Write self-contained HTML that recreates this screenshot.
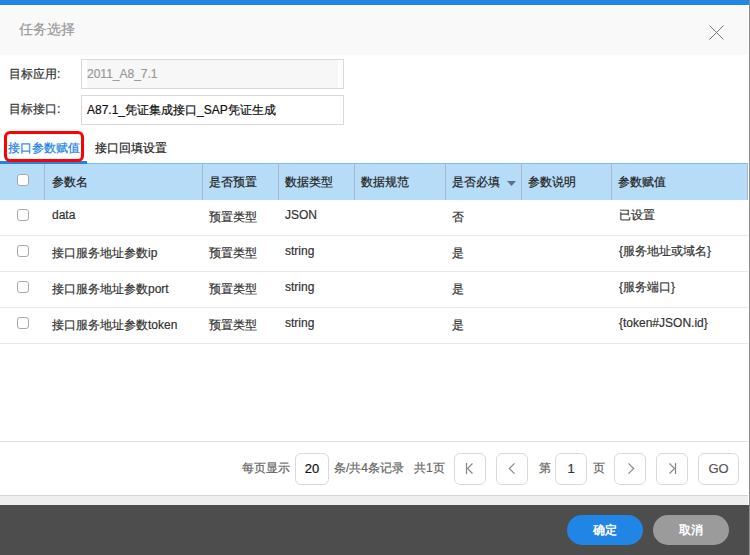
<!DOCTYPE html>
<html><head><meta charset="utf-8">
<style>
*{box-sizing:border-box;margin:0;padding:0}
html,body{width:750px;height:555px;overflow:hidden;background:#fff;font-family:"Liberation Sans",sans-serif;font-size:12px;color:#333;-webkit-text-stroke-width:0.2px}
.abs{position:absolute}
#topbar{left:0;top:0;width:749px;height:5px;background:#2185e6}
#rline{left:749px;top:0;width:1px;height:555px;background:#8c8c8c}
#hdr{left:0;top:6px;width:748px;height:49px;background:#f9f9fa}
#title{left:19px;top:20px;font-size:14px;color:#999;line-height:18px;white-space:nowrap}
.lbl{left:9px;font-size:12px;color:#333;line-height:14px;white-space:nowrap}
.inp{left:81px;width:263px;height:30px;border:1px solid #d9d9d9;background:#fff}
.inp .in{position:absolute;left:5px;right:5px;top:0;bottom:0}
.inp span{position:absolute;left:1px;top:7px;line-height:14px;font-size:12px;white-space:nowrap}
#redbox{z-index:3;left:4px;top:131px;width:80px;height:31px;border:3px solid #f00;border-radius:6px}
#tabline{left:0;top:161px;width:87px;height:3px;background:#1f84e4;z-index:2}
.tab{top:141px;line-height:14px;font-size:12px;white-space:nowrap}
#thead{left:0;top:163px;width:748px;height:37px;background:#b6dcf7;border-top:1px solid #78bdf8}
.sep{top:164px;width:1px;height:36px;background:#aab6d6}
.th{top:175px;line-height:14px;font-size:12px;color:#222;white-space:nowrap}
.cb{width:12px;height:12px;border:1px solid #a9a9a9;border-radius:3px;background:#fff}
.rowb{left:0;width:748px;height:1px;background:#e8e8e8}
.td{line-height:14px;font-size:12px;color:#333;white-space:nowrap}
#pgtop{left:0;top:441px;width:748px;height:1px;background:#e3e3e3}
#pgbot{left:0;top:495px;width:748px;height:1px;background:#d4d4d4}
#strip{left:0;top:496px;width:748px;height:9px;background:#eeeeee}
#foot{left:0;top:505px;width:749px;height:50px;background:#4d4d4d}
.pbtn{top:453px;width:32px;height:32px;border:1px solid #d9d9d9;border-radius:6px;background:#fff}
.ptxt{top:461px;line-height:14px;font-size:12px;color:#666;white-space:nowrap}
.fbtn{-webkit-text-stroke-width:0;top:515px;width:76px;height:30px;border-radius:15px;color:#fff;font-weight:bold;font-size:12px;line-height:30px;text-align:center}
</style></head><body>
<div class="abs" id="topbar"></div>
<div class="abs" id="hdr"></div>
<div class="abs" id="rline"></div>
<div class="abs" id="title">任务选择</div>
<svg class="abs" style="left:0;top:0" width="750" height="60"><path d="M709.5 25.5L723.5 39.5M723.5 25.5L709.5 39.5" stroke="#777" stroke-width="1" fill="none"/></svg>

<div class="abs lbl" style="top:67px">目标应用:</div>
<div class="abs inp" style="top:59px"><div class="in" style="background:#f7f7f7"></div><span style="left:5px;color:#999">2011_A8_7.1</span></div>
<div class="abs lbl" style="top:102px">目标接口:</div>
<div class="abs inp" style="top:95px"><span style="left:5px;color:#111">A87.1_凭证集成接口_SAP凭证生成</span></div>

<div class="abs tab" style="left:8px;color:#1a7fe8">接口参数赋值</div>
<div class="abs tab" style="left:95px;color:#222">接口回填设置</div>
<div class="abs" id="tabline"></div>
<div class="abs" id="redbox"></div>

<div class="abs" id="thead"></div>
<div class="abs sep" style="left:44px"></div>
<div class="abs sep" style="left:202px"></div>
<div class="abs sep" style="left:278px"></div>
<div class="abs sep" style="left:354px"></div>
<div class="abs sep" style="left:445px"></div>
<div class="abs sep" style="left:521px"></div>
<div class="abs sep" style="left:611px"></div>
<div class="abs sep" style="left:747px"></div>
<div class="abs cb" style="left:17px;top:174px"></div>
<div class="abs th" style="left:52px">参数名</div>
<div class="abs th" style="left:209px">是否预置</div>
<div class="abs th" style="left:285px">数据类型</div>
<div class="abs th" style="left:361px">数据规范</div>
<div class="abs th" style="left:452px">是否必填</div>
<svg class="abs" style="left:507px;top:181px" width="9" height="5" viewBox="0 0 9 5"><path d="M0 0H9L4.5 5Z" fill="#5f6f85"/></svg>
<div class="abs th" style="left:528px">参数说明</div>
<div class="abs th" style="left:618px">参数赋值</div>

<!-- rows -->
<div class="abs rowb" style="top:235px"></div>
<div class="abs rowb" style="top:271px"></div>
<div class="abs rowb" style="top:307px"></div>
<div class="abs rowb" style="top:343px"></div>

<div class="abs cb" style="left:17px;top:209px"></div>
<div class="abs td" style="left:52px;top:208px">data</div>
<div class="abs td" style="left:209px;top:210px">预置类型</div>
<div class="abs td" style="left:285px;top:208px">JSON</div>
<div class="abs td" style="left:452px;top:210px">否</div>
<div class="abs td" style="left:619px;top:208px">已设置</div>

<div class="abs cb" style="left:17px;top:245px"></div>
<div class="abs td" style="left:52px;top:246px">接口服务地址参数ip</div>
<div class="abs td" style="left:209px;top:246px">预置类型</div>
<div class="abs td" style="left:285px;top:244px">string</div>
<div class="abs td" style="left:452px;top:246px">是</div>
<div class="abs td" style="left:619px;top:244px">{服务地址或域名}</div>

<div class="abs cb" style="left:17px;top:281px"></div>
<div class="abs td" style="left:52px;top:282px">接口服务地址参数port</div>
<div class="abs td" style="left:209px;top:282px">预置类型</div>
<div class="abs td" style="left:285px;top:280px">string</div>
<div class="abs td" style="left:452px;top:282px">是</div>
<div class="abs td" style="left:619px;top:280px">{服务端口}</div>

<div class="abs cb" style="left:17px;top:317px"></div>
<div class="abs td" style="left:52px;top:318px">接口服务地址参数token</div>
<div class="abs td" style="left:209px;top:318px">预置类型</div>
<div class="abs td" style="left:285px;top:316px">string</div>
<div class="abs td" style="left:452px;top:318px">是</div>
<div class="abs td" style="left:619px;top:316px">{token#JSON.id}</div>

<!-- pager -->
<div class="abs" id="pgtop"></div>
<div class="abs ptxt" style="left:242px">每页显示</div>
<div class="abs pbtn" style="left:295px;width:34px;text-align:center;line-height:30px;font-size:13px;color:#111">20</div>
<div class="abs ptxt" style="left:334px">条/共4条记录</div>
<div class="abs ptxt" style="left:414px">共1页</div>
<div class="abs pbtn" style="left:454px"></div>
<div class="abs pbtn" style="left:496px"></div>
<div class="abs ptxt" style="left:539px">第</div>
<div class="abs pbtn" style="left:555px;text-align:center;line-height:30px;font-size:13px;color:#333">1</div>
<div class="abs ptxt" style="left:593px">页</div>
<div class="abs pbtn" style="left:614px"></div>
<div class="abs pbtn" style="left:656px"></div>
<div class="abs pbtn" style="left:698px;width:41px;text-align:center;line-height:30px;font-size:13px;color:#555">GO</div>
<svg class="abs" style="left:0;top:440px" width="750" height="50" viewBox="0 440 750 50"><g stroke="#888" stroke-width="1.2" fill="none">
<path d="M466.5 463V474M472.5 463.5L467.5 468.5L472.5 473.5"/>
<path d="M514.5 463.3L509.3 468.5L514.5 473.7"/>
<path d="M628.5 463.3L633.7 468.5L628.5 473.7"/>
<path d="M669.5 463.5L674.5 468.5L669.5 473.5M675.5 463V474"/>
</g></svg>
<div class="abs" id="pgbot"></div>
<div class="abs" id="strip"></div>

<div class="abs" id="foot"></div>
<div class="abs fbtn" style="left:567px;background:#2185e6">确定</div>
<div class="abs fbtn" style="left:653px;background:#9b9b9b">取消</div>
</body></html>
